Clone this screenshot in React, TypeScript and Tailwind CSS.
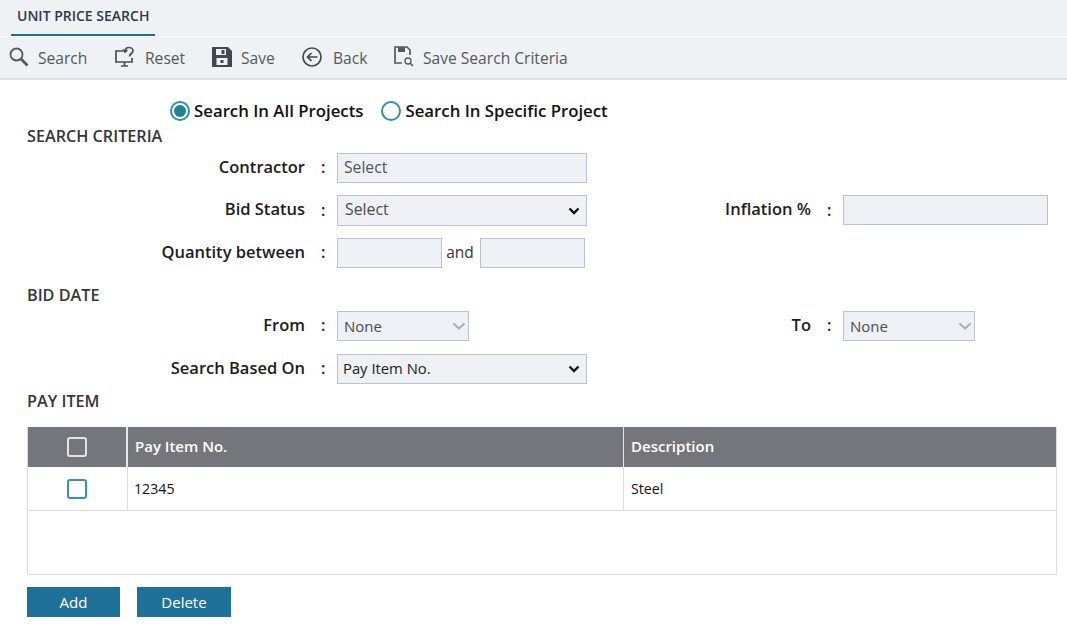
import type { ReactNode } from "react";

const Chevron = ({ muted }: { muted?: boolean }) => (
  <svg
    width={muted ? 14 : 12}
    height="8"
    viewBox={muted ? "0 0 14 8" : "0 0 12 8"}
    fill="none"
    className={muted ? "-mr-[4px] shrink-0" : "shrink-0"}
  >
    <path
      d={muted ? "M1.5 1.5 7 6.500l5.500-5" : "M1.5 1.5 6 6l4.5-4.5"}
      stroke={muted ? "#a9adb2" : "#111"}
      strokeWidth={muted ? 2 : 2.4}
    />
  </svg>
);

const SearchIcon = () => (
  <svg width="22" height="22" viewBox="0 0 22 22" fill="none" stroke="#55585e">
    <circle cx="8.5" cy="8.5" r="6" strokeWidth="1.8" />
    <path d="M13 13l6.5 6.5" strokeWidth="2.8" />
  </svg>
);

const ResetIcon = () => (
  <svg width="24" height="22" viewBox="0 0 24 22" fill="none" stroke="#4a4d53" strokeWidth="1.7">
    <path d="M9 5H2v11h16v-4" />
    <path d="M7 20h7M10.500 16v4" />
    <path d="M11 5.500C11 2.500 13 1.500 15 1.500s4 1.200 4 3.300c0 2.600-3.500 2.800-3.500 5.700" />
    <path d="M9 3.500l2 2.500 2.300-2" />
  </svg>
);

const SaveIcon = () => (
  <svg width="22" height="22" viewBox="0 0 22 22">
    <path
      fillRule="evenodd"
      fill="#44474d"
      d="M1 1h16l4 4v16H1zM5 3v6h10V3zM10.500 4h3v4h-3zM5.500 12v7h11v-7zM9.500 14h3v3h-3z"
    />
  </svg>
);

const BackIcon = () => (
  <svg width="22" height="22" viewBox="0 0 22 22" fill="none" stroke="#44474d">
    <circle cx="11" cy="11" r="9" strokeWidth="1.7" />
    <path d="M16.500 11H6.500M10.500 7l-4 4 4 4" strokeWidth="1.7" />
  </svg>
);

const SaveCriteriaIcon = () => (
  <svg width="22" height="22" viewBox="0 0 22 22" fill="none" stroke="#55585e">
    <path d="M9 17H2V1h12l3 3v5" strokeWidth="1.7" />
    <rect x="5" y="1" width="7" height="5" fill="#55585e" stroke="none" />
    <circle cx="15" cy="15" r="3" strokeWidth="1.300" />
    <path d="M17 17l3 3" strokeWidth="1.600" />
  </svg>
);

const tools: { label: string; icon: ReactNode; gap: string; width: string }[] = [
  { label: "Search", icon: <SearchIcon />, gap: "gap-[8px]", width: "w-[106px]" },
  { label: "Reset", icon: <ResetIcon />, gap: "gap-[7px]", width: "w-[97px]" },
  { label: "Save", icon: <SaveIcon />, gap: "gap-[8px]", width: "w-[90px]" },
  { label: "Back", icon: <BackIcon />, gap: "gap-[10px]", width: "w-[92px]" },
  { label: "Save Search Criteria", icon: <SaveCriteriaIcon />, gap: "gap-[8px]", width: "w-[190px]" },
];

const field = "h-[30px] bg-[#eef1f5] border border-[#bcc3cb] text-[#555]";

function Label({ text, width = "w-[278px]" }: { text: string; width?: string }) {
  return (
    <>
      <div className={`${width} shrink-0 pb-[2px] text-right text-[16.500px] font-semibold text-[#1c1c1c]`}>{text}</div>
      <div className="w-[32px] shrink-0 pb-[2px] pl-[16px] text-[16px] font-semibold text-[#1c1c1c]">:</div>
    </>
  );
}

function SelectBox({ children, width, muted }: { children: ReactNode; width: string; muted?: boolean }) {
  return (
    <div className={`${field} ${width} flex items-center justify-between px-[6px]`}>
      {children}
      <Chevron muted={muted} />
    </div>
  );
}

function SectionTitle({ text, className }: { text: string; className: string }) {
  return <div className={`text-[16.200px] font-semibold text-[#33363b] leading-[20px] ${className}`}>{text}</div>;
}

function Radio({ checked, label }: { checked?: boolean; label: string }) {
  return (
    <div className="flex items-center gap-[4px]">
      <span className="flex h-[20px] w-[20px] items-center justify-center rounded-full border-2 border-[#2f8fa8] bg-white">
        {checked && <span className="h-[12px] w-[12px] rounded-full bg-[#1f7f9c]" />}
      </span>
      <span className="text-[16.800px] font-semibold text-[#111]">{label}</span>
    </div>
  );
}

export default function App() {
  return (
    <div
      className="h-[631px] w-[1067px] overflow-hidden bg-white"
      style={{ fontFamily: '"Open Sans", sans-serif' }}
    >
      {/* Tab strip */}
      <div className="h-[37px] border-b border-white bg-[#eef2f5] pl-[11px]">
        <div className="h-[36px] w-[144px] border-b-2 border-[#1f6f93] pl-[6px] pt-[6px] text-[14px] font-semibold leading-[20px] text-[#2f3a4a]">
          UNIT PRICE SEARCH
        </div>
      </div>

      {/* Toolbar */}
      <div className="flex h-[43px] items-center border-b-2 border-[#dde1e5] bg-[#eef2f5] pl-[8px]">
        {tools.map((t) => (
          <div key={t.label} className={`flex items-center ${t.gap} ${t.width} shrink-0`}>
            {t.icon}
            <span className="pt-[2px] text-[15.600px] font-medium text-[#55585e]">{t.label}</span>
          </div>
        ))}
      </div>

      {/* Scope */}
      <div className="mt-[20px] flex h-[22px] items-center gap-[18px] pl-[170px]">
        <Radio checked label="Search In All Projects" />
        <Radio label="Search In Specific Project" />
      </div>

      <SectionTitle text="SEARCH CRITERIA" className="mt-[4px] pl-[27px]" />

      <div className="mt-[7px] flex h-[30px] items-center pl-[27px]">
        <Label text="Contractor" />
        <div className={`${field} flex w-[250px] items-center pl-[6px] text-[15.700px] text-[#7a7f85]`}>Select</div>
      </div>

      <div className="mt-[12px] flex h-[31px] items-center pl-[27px]">
        <Label text="Bid Status" />
        <SelectBox width="w-[250px] h-[31px]">
          <span className="pb-[1px] pl-[1px] text-[15.800px] text-[#4c4c4c]">Select</span>
        </SelectBox>
        <Label text="Inflation %" width="w-[224px]" />
        <div className={`${field} w-[205px] self-start`} />
      </div>

      <div className="mt-[12px] flex h-[30px] items-center pl-[27px]">
        <Label text="Quantity between" />
        <div className={`${field} w-[105px]`} />
        <span className="w-[38px] pr-[2px] text-center text-[15.500px] text-[#333]">and</span>
        <div className={`${field} w-[105px]`} />
      </div>

      <SectionTitle text="BID DATE" className="mt-[17px] pl-[27px]" />

      <div className="mt-[6px] flex h-[30px] items-center pl-[27px]">
        <Label text="From" />
        <SelectBox width="w-[132px]" muted>
          <span className="text-[15px] text-[#4c4c4c]">None</span>
        </SelectBox>
        <Label text="To" width="w-[342px]" />
        <SelectBox width="w-[132px]" muted>
          <span className="text-[15px] text-[#4c4c4c]">None</span>
        </SelectBox>
      </div>

      <div className="mt-[13px] flex h-[30px] items-center pl-[27px]">
        <Label text="Search Based On" />
        <SelectBox width="w-[250px]">
          <span className="-ml-[1px] pb-[1px] text-[14.800px] text-[#222]">Pay Item No.</span>
        </SelectBox>
      </div>

      <SectionTitle text="PAY ITEM" className="mt-[7px] pl-[27px]" />

      {/* Pay item table */}
      <div className="ml-[27px] mt-[16px] h-[148px] w-[1030px] border border-t-0 border-[#dcdcdc]">
        <div className="flex h-[40px] bg-[#75767b] text-[15px] font-semibold text-white">
          <div className="flex w-[100px] items-center justify-center border-r-2 border-[#e6e6e6]">
            <span className="h-[20px] w-[20px] rounded-[3px] border-[2.500px] border-[#e4e4e4] bg-[#75767b]" />
          </div>
          <div className="flex w-[496px] items-center border-r border-[#e6e6e6] pb-[2px] pl-[7px]">Pay Item No.</div>
          <div className="flex flex-1 items-center pb-[2px] pl-[7px]">Description</div>
        </div>
        <div className="flex h-[44px] border-b border-[#dcdcdc] text-[14.200px] text-[#111]">
          <div className="flex w-[100px] items-center justify-center border-r border-[#dcdcdc]">
            <span className="mr-[2px] mt-[1px] h-[20px] w-[20px] rounded-[3px] border-[2.500px] border-[#3391bd] bg-white" />
          </div>
          <div className="flex w-[496px] items-center border-r border-[#dcdcdc] pl-[6px] pt-[1px]">12345</div>
          <div className="flex flex-1 items-center pl-[7px] pt-[1px]">Steel</div>
        </div>
      </div>

      <div className="ml-[27px] mt-[12px] flex gap-[17px]">
        <button className="h-[30px] w-[93px] bg-[#20719a] text-[15px] text-white">Add</button>
        <button className="h-[30px] w-[94px] bg-[#20719a] text-[15px] text-white">Delete</button>
      </div>
    </div>
  );
}
